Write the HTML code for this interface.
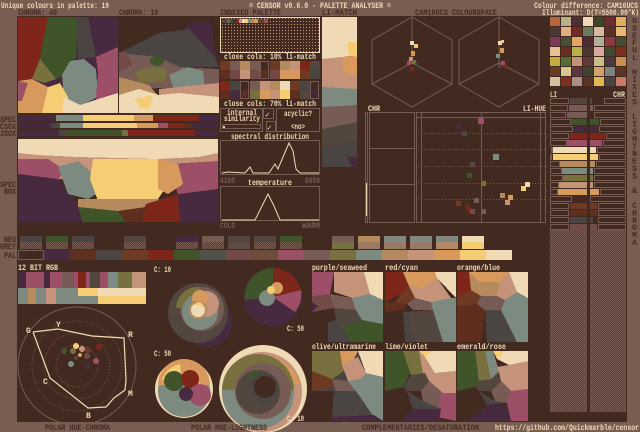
<!DOCTYPE html>
<html><head><meta charset="utf-8"><style>
html,body{margin:0;padding:0;background:#785e52;width:640px;height:432px;overflow:hidden}
svg{display:block}
text{font-family:"Liberation Mono",monospace;font-size:8px;font-weight:bold}
.vt{position:absolute;left:629px;top:17px;width:10px;font:bold 8px "Liberation Mono",monospace;color:#432a21;writing-mode:vertical-lr;text-orientation:upright;letter-spacing:-1.6px;line-height:10px}
</style></head><body>
<svg width="640" height="432" viewBox="0 0 640 432" xmlns="http://www.w3.org/2000/svg" shape-rendering="crispEdges">
<defs>
<pattern id="chk" width="2" height="2" patternUnits="userSpaceOnUse"><rect width="2" height="2" fill="#5b3f33"/><rect width="1" height="1" fill="#765c54"/><rect x="1" y="1" width="1" height="1" fill="#765c54"/></pattern>
<pattern id="dots" width="3" height="3" patternUnits="userSpaceOnUse"><rect width="3" height="3" fill="#432a21"/><rect width="1" height="1" fill="#c4937a"/></pattern>
</defs>
<rect width="640" height="432" fill="#785e52"/>
<rect x="17" y="16" width="610" height="406" fill="#432a21"/>
<text x="1" y="8" fill="#f0d9b5" textLength="108" lengthAdjust="spacingAndGlyphs">Unique colours in palette: 19</text>
<text x="249" y="8" fill="#f0d9b5" textLength="142" lengthAdjust="spacingAndGlyphs">= CENSOR v0.6.0 - PALETTE ANALYSER =</text>
<text x="534" y="8" fill="#f0d9b5" textLength="104" lengthAdjust="spacingAndGlyphs">Colour difference: CAM16UCS</text>
<text x="542" y="15" fill="#f0d9b5" textLength="97" lengthAdjust="spacingAndGlyphs">Illuminant: D(T=5500.00°K)</text>
<text x="18" y="15" fill="#432a21" textLength="39" lengthAdjust="spacingAndGlyphs">CHROMA: 40</text>
<text x="119" y="15" fill="#432a21" textLength="39" lengthAdjust="spacingAndGlyphs">CHROMA: 10</text>
<text x="220" y="15" fill="#432a21" textLength="61" lengthAdjust="spacingAndGlyphs">INDEXED PALETTE</text>
<text x="322" y="15" fill="#432a21" textLength="35" lengthAdjust="spacingAndGlyphs">LI-MATCH</text>
<text x="415" y="15" fill="#432a21" textLength="82" lengthAdjust="spacingAndGlyphs">CAM16UCS COLOURSPACE</text>
<g fill="#432a21">
<text x="0" y="122" textLength="16" lengthAdjust="spacingAndGlyphs">SPEC</text>
<text x="0" y="129" textLength="16" lengthAdjust="spacingAndGlyphs">CSOX</text>
<text x="0" y="136" textLength="16" lengthAdjust="spacingAndGlyphs">JSOX</text>
<text x="0" y="187" textLength="16" lengthAdjust="spacingAndGlyphs">SPEC</text>
<text x="4" y="194" textLength="12" lengthAdjust="spacingAndGlyphs">BOX</text>
<text x="4" y="242" textLength="12" lengthAdjust="spacingAndGlyphs">NEU</text>
<text x="0" y="249" textLength="16" lengthAdjust="spacingAndGlyphs">GREY</text>
<text x="4" y="258" textLength="12" lengthAdjust="spacingAndGlyphs">PAL</text>
</g>
<svg x="18" y="17" width="100" height="96" viewBox="0 0 100 96">
<rect width="100" height="96" fill="#472a40"/>
<polygon points="0,0 30,0 24,40 14,62 0,64" fill="#7e2619"/>
<polygon points="30,0 60,0 58,40 46,58 38,62 22,42" fill="#3f5428"/>
<polygon points="58,0 70,0 78,40 60,42" fill="#4a4443"/>
<polygon points="22,42 38,62 26,66 14,62" fill="#78703f"/>
<polygon points="44,58 52,44 66,42 78,52 80,80 60,90 46,80" fill="#7d8a80"/>
<polygon points="78,40 100,30 100,76 82,96 78,80 80,56" fill="#9c4f66"/>
<polygon points="0,64 14,62 30,70 36,86 30,96 0,96" fill="#d89a5c"/>
<polygon points="30,70 42,66 50,80 50,96 24,96" fill="#f5cd74"/>
<polygon points="46,80 62,88 80,82 100,76 100,96 44,96" fill="#f0d9b5"/>
<polygon points="0,64 10,66 4,84 0,84" fill="#9c4f66"/>
</svg>
<svg x="119" y="17" width="100" height="96" viewBox="0 0 100 96">
<rect width="100" height="96" fill="#432a21"/>
<polygon points="70,6 92,4 96,40 50,32" fill="#472a40"/>
<polygon points="40,16 70,12 96,40 100,50 0,50 0,36" fill="#4a4443"/>
<polygon points="0,36 40,40 60,50 100,52 100,70 0,72" fill="#765c54"/>
<polygon points="0,35 8,35 14,48 0,55" fill="#744a48"/>
<ellipse cx="38" cy="44" rx="7" ry="5" fill="#3f5428"/>
<polygon points="16,55 30,50 48,52 46,64 20,66" fill="#78703f"/>
<polygon points="0,60 30,68 40,80 0,82" fill="#b58a5c"/>
<polygon points="50,58 68,50 84,54 86,72 56,75" fill="#7d8a80"/>
<polygon points="40,72 100,66 100,82 40,84" fill="#c4937a"/>
<polygon points="0,78 20,72 40,78 60,76 100,80 100,96 0,96" fill="#f0d9b5"/>
<polygon points="16,82 34,78 30,92 22,92" fill="#f5cd74"/>
</svg>
<g>
<rect x="18" y="115" width="200" height="6" fill="#472a40"/><rect x="56" y="115" width="27" height="6" fill="#7d8a80"/><rect x="83" y="115" width="51" height="6" fill="#f5cd74"/><rect x="134" y="115" width="19" height="6" fill="#d89a5c"/><rect x="153" y="115" width="46" height="6" fill="#7e2619"/>
<rect x="18" y="123" width="200" height="5" fill="#472a40"/><rect x="51" y="123" width="5" height="5" fill="#4a4443"/><rect x="56" y="123" width="4" height="5" fill="#52463f"/><rect x="60" y="123" width="23" height="5" fill="#7d8a80"/><rect x="83" y="123" width="54" height="5" fill="#f5cd74"/><rect x="137" y="123" width="21" height="5" fill="#d89a5c"/><rect x="158" y="123" width="10" height="5" fill="#9c4f66"/><rect x="168" y="123" width="16" height="5" fill="#7e2619"/><rect x="184" y="123" width="8" height="5" fill="#5e2e1e"/>
<rect x="18" y="130" width="200" height="6" fill="#472a40"/><rect x="59" y="130" width="5" height="6" fill="#4a4443"/><rect x="64" y="130" width="3" height="6" fill="#52463f"/><rect x="67" y="130" width="55" height="6" fill="#3f5428"/><rect x="122" y="130" width="6" height="6" fill="#78703f"/><rect x="128" y="130" width="67" height="6" fill="#7e2619"/>
</g>
<svg x="18" y="139" width="200" height="83" viewBox="0 0 200 83">
<rect width="200" height="83" fill="#432a21"/>
<polygon points="0,10 200,10 200,40 0,40" fill="#c4937a"/>
<polygon points="0,20 30,20 45,30 40,45 0,40" fill="#9c4f66"/>
<polygon points="150,25 200,22 200,55 160,55" fill="#9c4f66"/>
<polygon points="0,35 40,40 55,60 80,83 0,83" fill="#472a40"/>
<polygon points="40,28 60,22 75,35 78,55 70,60 50,55" fill="#7d8a80"/>
<polygon points="75,20 140,20 150,45 140,60 80,62 72,40" fill="#f5cd74"/>
<polygon points="140,20 160,25 165,45 150,55 140,50" fill="#d89a5c"/>
<polygon points="60,60 140,60 150,70 100,72 60,68" fill="#b58a5c"/>
<polygon points="60,68 100,72 110,83 65,83" fill="#3f5428"/>
<polygon points="128,65 160,55 162,83 122,83" fill="#7e2619"/>
<polygon points="160,55 200,50 200,83 162,83" fill="#472a40"/>
<polygon points="100,72 128,68 125,83 108,83" fill="#5e2e1e"/>
<polygon points="0,0 200,0 200,14 180,18 140,20 60,18 20,16 0,14" fill="#f0d9b5"/>
</svg>
<rect x="220.5" y="17.5" width="99" height="35" fill="url(#dots)" stroke="#f0d9b5"/>
<g>
<rect x="223" y="19" width="4" height="4" fill="#4a4443"/><rect x="227" y="19" width="3" height="4" fill="#765c54"/><rect x="230" y="19" width="3" height="4" fill="#3f5428"/><rect x="233" y="19" width="3" height="4" fill="#472a40"/><rect x="236" y="19" width="3" height="4" fill="#7e2619"/><rect x="239" y="19" width="3" height="4" fill="#c4937a"/><rect x="242" y="19" width="3" height="4" fill="#f0d9b5"/><rect x="245" y="19" width="3" height="4" fill="#f5cd74"/><rect x="248" y="19" width="3" height="4" fill="#7d8a80"/><rect x="251" y="19" width="3" height="4" fill="#b58a5c"/><rect x="254" y="19" width="4" height="4" fill="#d89a5c"/><rect x="258" y="19" width="3" height="4" fill="#52463f"/><rect x="261" y="19" width="3" height="4" fill="#6e3a24"/><rect x="264" y="19" width="4" height="4" fill="#9c4f66"/>
</g>
<text x="224" y="59" fill="#f0d9b5" textLength="92" lengthAdjust="spacingAndGlyphs">close cols: 10% li-match</text>
<g>
<rect x="220" y="61" width="10" height="9" fill="#6e3a24"/><rect x="220" y="70" width="10" height="9" fill="#5e2e1e"/>
<rect x="230" y="61" width="10" height="9" fill="#765c54"/><rect x="230" y="70" width="10" height="9" fill="#744a48"/>
<rect x="240" y="61" width="10" height="9" fill="#b58a5c"/><rect x="240" y="70" width="10" height="9" fill="#c4937a"/>
<rect x="250" y="61" width="10" height="9" fill="#765c54"/><rect x="250" y="70" width="10" height="9" fill="#744a48"/>
<rect x="260.5" y="61.5" width="8" height="17" fill="#432a21" stroke="#765c54"/><rect x="262" y="70" width="5" height="7" fill="#5e2e1e"/>
<rect x="270" y="61" width="10" height="9" fill="#6e3a24"/><rect x="270" y="70" width="10" height="9" fill="#744a48"/>
<rect x="280" y="61" width="10" height="9" fill="#b58a5c"/><rect x="280" y="70" width="10" height="9" fill="#d89a5c"/>
<rect x="290" y="61" width="10" height="9" fill="#c4937a"/><rect x="290" y="70" width="10" height="9" fill="#d89a5c"/>
<rect x="300" y="61" width="10" height="9" fill="#7e2619"/><rect x="300" y="70" width="10" height="9" fill="#6e3a24"/>
<rect x="310" y="61" width="10" height="9" fill="#52463f"/><rect x="310" y="70" width="10" height="9" fill="#4a4443"/>
<rect x="220" y="81" width="10" height="9" fill="#7e2619"/><rect x="220" y="90" width="10" height="9" fill="#5e2e1e"/>
<rect x="230" y="81" width="10" height="9" fill="#4a4443"/><rect x="230" y="90" width="10" height="9" fill="#472a40"/>
<rect x="240.5" y="81.5" width="8" height="17" fill="#432a21" stroke="#765c54"/><rect x="242" y="90" width="5" height="7" fill="#5e2e1e"/>
<rect x="250" y="81" width="10" height="9" fill="#765c54"/><rect x="250" y="90" width="10" height="9" fill="#78703f"/>
<rect x="260" y="81" width="10" height="9" fill="#c4937a"/><rect x="260" y="90" width="10" height="9" fill="#d89a5c"/>
<rect x="270" y="81" width="10" height="9" fill="#b58a5c"/><rect x="270" y="90" width="10" height="9" fill="#c4937a"/>
<rect x="280" y="81" width="10" height="9" fill="#f0d9b5"/><rect x="280" y="90" width="10" height="9" fill="#f5cd74"/>
<rect x="290" y="81" width="10" height="9" fill="#6e3a24"/><rect x="290" y="90" width="10" height="9" fill="#5e2e1e"/>
<rect x="300" y="81" width="10" height="9" fill="#4a4443"/><rect x="300" y="90" width="10" height="9" fill="#52463f"/>
<rect x="310.5" y="81.5" width="8" height="17" fill="#432a21" stroke="#765c54"/><rect x="312" y="90" width="5" height="7" fill="#472a40"/>
</g>
<text x="224" y="106" fill="#f0d9b5" textLength="92" lengthAdjust="spacingAndGlyphs">close cols: 70% li-match</text>
<rect x="220.5" y="108.5" width="42" height="23" fill="none" stroke="#765c54"/>
<text x="227" y="115" fill="#f0d9b5" textLength="30" lengthAdjust="spacingAndGlyphs">internal</text>
<text x="224" y="121" fill="#f0d9b5" textLength="36" lengthAdjust="spacingAndGlyphs">similarity</text>
<rect x="222.5" y="124.5" width="38" height="4" fill="none" stroke="#765c54"/><rect x="223" y="126" width="2" height="2" fill="#f0d9b5"/>
<rect x="263.5" y="108.5" width="10" height="10" fill="none" stroke="#765c54"/><text x="265" y="117" fill="#f0d9b5">✓</text>
<rect x="266.5" y="121.5" width="9" height="10" fill="none" stroke="#765c54"/><text x="267" y="130" fill="#f0d9b5">✓</text>
<rect x="276.5" y="108.5" width="43" height="23" fill="none" stroke="#765c54"/>
<text x="284" y="116" fill="#f0d9b5" textLength="28" lengthAdjust="spacingAndGlyphs">acyclic?</text>
<text x="291" y="129" fill="#f0d9b5" textLength="14" lengthAdjust="spacingAndGlyphs">&lt;no&gt;</text>
<text x="231" y="139" fill="#f0d9b5" textLength="78" lengthAdjust="spacingAndGlyphs">spectral distribution</text>
<rect x="220.5" y="140.5" width="99" height="34" fill="none" stroke="#765c54"/>
<polyline points="222,173 228,172 245,173 250,167 253,173 269,173 275,164 278,169 283,157 289,143 293,151 296,169 300,173 319,173" fill="none" stroke="#f0d9b5" shape-rendering="auto"/>
<text x="220" y="183" fill="#765c54" textLength="15" lengthAdjust="spacingAndGlyphs">4100</text>
<text x="305" y="183" fill="#765c54" textLength="15" lengthAdjust="spacingAndGlyphs">6650</text>
<text x="248" y="185" fill="#f0d9b5" textLength="44" lengthAdjust="spacingAndGlyphs">temperature</text>
<rect x="220.5" y="186.5" width="99" height="34" fill="none" stroke="#765c54"/>
<polyline points="222,220 255,220 262,206 268,194 274,206 280,220 319,220" fill="none" stroke="#f0d9b5" shape-rendering="auto"/>
<text x="220" y="228" fill="#765c54" textLength="15" lengthAdjust="spacingAndGlyphs">COLD</text>
<text x="302" y="228" fill="#765c54" textLength="18" lengthAdjust="spacingAndGlyphs">WARM</text>
<svg x="322" y="17" width="35" height="153" viewBox="0 0 35 153">
<rect width="35" height="153" fill="#432a21"/>
<polygon points="0,0 35,0 35,153 0,153" fill="#f0d9b5"/>
<polygon points="0,42 20,40 35,38 35,150 0,150" fill="#c4937a"/>
<polygon points="26,25 35,25 35,40 26,38" fill="#f5cd74"/>
<polygon points="20,40 35,40 35,58 22,56" fill="#d89a5c"/>
<polygon points="0,70 35,72 35,88 0,90" fill="#7d8a80"/>
<polygon points="0,90 35,88 35,105 0,112" fill="#765c54"/>
<polygon points="0,112 35,105 35,130 0,140" fill="#52463f"/>
<polygon points="0,130 35,125 35,150 0,150" fill="#4a4443"/>
<polygon points="25,140 35,140 35,150 30,150" fill="#472a40"/>
<polygon points="0,150 35,150 35,153 0,153" fill="#432a21"/>
</svg>
<g fill="none" stroke="#765c54" shape-rendering="auto">
<polygon points="412,17 452,40 452,84 412,107 372,84 372,40"/>
<line x1="412" y1="17" x2="412" y2="63"/><line x1="412" y1="63" x2="372" y2="84"/><line x1="412" y1="63" x2="452" y2="84"/>
<polygon points="499,17 539,40 539,84 499,107 459,84 459,40"/>
<line x1="499" y1="17" x2="499" y2="63"/><line x1="499" y1="63" x2="459" y2="84"/><line x1="499" y1="63" x2="539" y2="84"/>
</g>
<g>
<rect x="410" y="41" width="4" height="4" fill="#f0d9b5"/><rect x="414" y="44" width="4" height="4" fill="#f5cd74"/><rect x="411" y="51" width="4" height="5" fill="#d89a5c"/><rect x="409" y="57" width="4" height="4" fill="#c4937a"/><rect x="407" y="61" width="4" height="4" fill="#9c4f66"/><rect x="412" y="60" width="4" height="4" fill="#78703f"/><rect x="415" y="63" width="3" height="3" fill="#3f5428"/><rect x="410" y="67" width="4" height="4" fill="#7e2619"/><rect x="408" y="69" width="3" height="3" fill="#472a40"/>
<rect x="498" y="41" width="4" height="4" fill="#f0d9b5"/><rect x="501" y="40" width="3" height="3" fill="#f5cd74"/><rect x="500" y="48" width="4" height="5" fill="#d89a5c"/><rect x="496" y="54" width="4" height="4" fill="#7d8a80"/><rect x="501" y="61" width="4" height="4" fill="#9c4f66"/><rect x="503" y="65" width="4" height="3" fill="#7e2619"/><rect x="498" y="64" width="3" height="4" fill="#52463f"/><rect x="499" y="69" width="3" height="3" fill="#472a40"/>
</g>
<text x="368" y="111" fill="#f0d9b5" textLength="12" lengthAdjust="spacingAndGlyphs">CHR</text>
<text x="523" y="111" fill="#f0d9b5" textLength="23" lengthAdjust="spacingAndGlyphs">LI-HUE</text>
<g fill="none" stroke="#765c54">
<rect x="365.5" y="112.5" width="2" height="110"/>
<rect x="369.5" y="112.5" width="45" height="110"/>
<line x1="370" y1="148.5" x2="414" y2="148.5"/><line x1="370" y1="184.5" x2="414" y2="184.5"/>
<rect x="416.5" y="112.5" width="129" height="110"/>
<line x1="417" y1="117.5" x2="545" y2="117.5"/>
<line x1="421.5" y1="113" x2="421.5" y2="222"/><line x1="540.5" y1="113" x2="540.5" y2="222"/>
<line x1="481.5" y1="113" x2="481.5" y2="222"/>
<g stroke-dasharray="1 2"><line x1="418" y1="133.5" x2="545" y2="133.5"/><line x1="418" y1="149.5" x2="545" y2="149.5"/><line x1="418" y1="166.5" x2="545" y2="166.5"/><line x1="418" y1="183.5" x2="545" y2="183.5"/><line x1="418" y1="199.5" x2="545" y2="199.5"/></g>
</g>
<rect x="366" y="183" width="1" height="33" fill="#f0d9b5"/>
<g>
<rect x="478" y="118" width="6" height="6" fill="#9c4f66"/><rect x="457" y="124" width="5" height="5" fill="#472a40"/><rect x="462" y="131" width="5" height="5" fill="#4a4443"/><rect x="493" y="154" width="6" height="6" fill="#7d8a80"/><rect x="470" y="162" width="5" height="5" fill="#52463f"/><rect x="467" y="173" width="5" height="5" fill="#3f5428"/><rect x="481" y="181" width="5" height="5" fill="#78703f"/><rect x="525" y="182" width="5" height="5" fill="#f0d9b5"/><rect x="521" y="186" width="5" height="5" fill="#f5cd74"/><rect x="500" y="193" width="5" height="5" fill="#b58a5c"/><rect x="508" y="195" width="5" height="5" fill="#d89a5c"/><rect x="505" y="200" width="5" height="5" fill="#c4937a"/><rect x="474" y="198" width="5" height="5" fill="#765c54"/><rect x="456" y="201" width="5" height="5" fill="#6e3a24"/><rect x="465" y="203" width="5" height="5" fill="#5e2e1e"/><rect x="467" y="208" width="4" height="4" fill="#7e2619"/><rect x="470" y="209" width="5" height="5" fill="#744a48"/><rect x="481" y="209" width="5" height="5" fill="#765c54"/>
</g>
<g>
<rect x="550" y="17" width="76" height="70" fill="#432a21"/>
<rect x="550" y="17" width="10" height="9" fill="#b5663a"/><rect x="561" y="17" width="10" height="9" fill="#b8b08a"/><rect x="572" y="17" width="10" height="9" fill="#4a3030"/><rect x="583" y="17" width="10" height="9" fill="#f0d9b5"/><rect x="594" y="17" width="10" height="9" fill="#3f4428"/><rect x="605" y="17" width="10" height="9" fill="#6e2c30"/><rect x="616" y="17" width="10" height="9" fill="#e0ad60"/>
<rect x="550" y="27" width="10" height="9" fill="#4a3838"/><rect x="561" y="27" width="10" height="9" fill="#e0b080"/><rect x="572" y="27" width="10" height="9" fill="#6e2c22"/><rect x="583" y="27" width="10" height="9" fill="#6a7a60"/><rect x="594" y="27" width="10" height="9" fill="#d8b8a0"/><rect x="605" y="27" width="10" height="9" fill="#5a3028"/><rect x="616" y="27" width="10" height="9" fill="#e8b878"/>
<rect x="550" y="37" width="10" height="9" fill="#7a3a58"/><rect x="561" y="37" width="10" height="9" fill="#4a5038"/><rect x="572" y="37" width="10" height="9" fill="#e0a860"/><rect x="583" y="37" width="10" height="9" fill="#502a30"/><rect x="594" y="37" width="10" height="9" fill="#b0b098"/><rect x="605" y="37" width="10" height="9" fill="#8a3a40"/><rect x="616" y="37" width="10" height="9" fill="#4a4a30"/>
<rect x="550" y="47" width="10" height="9" fill="#e8c098"/><rect x="561" y="47" width="10" height="9" fill="#6a2c22"/><rect x="572" y="47" width="10" height="9" fill="#b8b048"/><rect x="583" y="47" width="10" height="9" fill="#4a3830"/><rect x="594" y="47" width="10" height="9" fill="#d8a8a0"/><rect x="605" y="47" width="10" height="9" fill="#3f4a30"/><rect x="616" y="47" width="10" height="9" fill="#7e3020"/>
<rect x="550" y="57" width="10" height="9" fill="#c8a840"/><rect x="561" y="57" width="10" height="9" fill="#5a6a38"/><rect x="572" y="57" width="10" height="9" fill="#c4937a"/><rect x="583" y="57" width="10" height="9" fill="#5e3a38"/><rect x="594" y="57" width="10" height="9" fill="#c8c088"/><rect x="605" y="57" width="10" height="9" fill="#4a3a40"/><rect x="616" y="57" width="10" height="9" fill="#c89050"/>
<rect x="550" y="67" width="10" height="9" fill="#6a3a22"/><rect x="561" y="67" width="10" height="9" fill="#d8c890"/><rect x="572" y="67" width="10" height="9" fill="#5a3840"/><rect x="583" y="67" width="10" height="9" fill="#3f4430"/><rect x="594" y="67" width="10" height="9" fill="#d8a070"/><rect x="605" y="67" width="10" height="9" fill="#7a8480"/><rect x="616" y="67" width="10" height="9" fill="#5a3428"/>
<rect x="550" y="77" width="10" height="9" fill="#d8c0a0"/><rect x="561" y="77" width="10" height="9" fill="#7e3022"/><rect x="572" y="77" width="10" height="9" fill="#a89088"/><rect x="583" y="77" width="10" height="9" fill="#5a3428"/><rect x="594" y="77" width="10" height="9" fill="#e0b858"/><rect x="605" y="77" width="10" height="9" fill="#4a4443"/><rect x="616" y="77" width="10" height="9" fill="#c87a6a"/>
</g>
<text x="550" y="97" fill="#f0d9b5" textLength="7" lengthAdjust="spacingAndGlyphs">LI</text>
<text x="613" y="97" fill="#f0d9b5" textLength="12" lengthAdjust="spacingAndGlyphs">CHR</text>
<rect x="550" y="230" width="37" height="182" fill="url(#chk)"/>
<rect x="590" y="230" width="36" height="182" fill="url(#chk)"/>
<g fill="none" stroke="#765c54">
<rect x="550.5" y="98.5" width="18" height="5"/><rect x="604.5" y="98.5" width="21" height="5"/>
<rect x="550.5" y="105.5" width="17" height="5"/><rect x="594.5" y="105.5" width="31" height="5"/>
<rect x="550.5" y="112.5" width="15" height="5"/><rect x="594.5" y="112.5" width="31" height="5"/>
<rect x="550.5" y="119.5" width="20" height="5"/><rect x="600.5" y="119.5" width="25" height="5"/>
<rect x="550.5" y="126.5" width="22" height="5"/><rect x="599.5" y="126.5" width="26" height="5"/>
<rect x="550.5" y="133.5" width="18" height="5"/><rect x="606.5" y="133.5" width="19" height="5"/>
<rect x="550.5" y="140.5" width="16" height="5"/><rect x="603.5" y="140.5" width="22" height="5"/>
<rect x="551.5" y="147.5" width="1" height="5"/><rect x="597.5" y="147.5" width="28" height="5"/>
<rect x="550.5" y="154.5" width="1" height="5"/><rect x="599.5" y="154.5" width="26" height="5"/>
<rect x="550.5" y="161.5" width="9" height="5"/><rect x="596.5" y="161.5" width="29" height="5"/>
<rect x="550.5" y="168.5" width="11" height="5"/><rect x="594.5" y="168.5" width="31" height="5"/>
<rect x="550.5" y="175.5" width="12" height="5"/><rect x="594.5" y="175.5" width="31" height="5"/>
<rect x="550.5" y="182.5" width="8" height="5"/><rect x="594.5" y="182.5" width="31" height="5"/>
<rect x="550.5" y="189.5" width="7" height="5"/><rect x="600.5" y="189.5" width="25" height="5"/>
<rect x="550.5" y="196.5" width="21" height="5"/><rect x="590.5" y="196.5" width="35" height="5"/>
<rect x="550.5" y="203.5" width="18" height="5"/><rect x="598.5" y="203.5" width="27" height="5"/>
<rect x="550.5" y="210.5" width="18" height="5"/><rect x="598.5" y="210.5" width="27" height="5"/>
<rect x="550.5" y="217.5" width="18" height="5"/><rect x="598.5" y="217.5" width="27" height="5"/>
<rect x="550.5" y="224.5" width="18" height="5"/><rect x="598.5" y="224.5" width="27" height="5"/>
</g>
<g>
<rect x="570" y="98" width="17" height="6" fill="#52463f"/><rect x="590" y="98" width="2" height="6" fill="#52463f"/>
<rect x="569" y="105" width="18" height="6" fill="#765c54"/><rect x="590" y="105" width="3" height="6" fill="#765c54"/>
<rect x="567" y="112" width="20" height="6" fill="#765c54"/>
<rect x="571" y="119" width="16" height="6" fill="#3f5428"/><rect x="590" y="119" width="9" height="6" fill="#3f5428"/>
<rect x="573" y="126" width="14" height="6" fill="#472a40"/><rect x="590" y="126" width="8" height="6" fill="#472a40"/>
<rect x="570" y="133" width="17" height="6" fill="#7e2619"/><rect x="590" y="133" width="15" height="6" fill="#7e2619"/>
<rect x="567" y="140" width="20" height="6" fill="#9c4f66"/><rect x="590" y="140" width="12" height="6" fill="#9c4f66"/>
<rect x="553" y="147" width="34" height="6" fill="#f0d9b5"/><rect x="590" y="147" width="6" height="6" fill="#f0d9b5"/>
<rect x="553" y="154" width="34" height="6" fill="#f5cd74"/><rect x="590" y="154" width="8" height="6" fill="#f5cd74"/>
<rect x="560" y="161" width="27" height="6" fill="#b58a5c"/><rect x="590" y="161" width="5" height="6" fill="#b58a5c"/>
<rect x="562" y="168" width="25" height="6" fill="#7d8a80"/><rect x="590" y="168" width="3" height="6" fill="#7d8a80"/>
<rect x="563" y="175" width="24" height="6" fill="#78703f"/><rect x="590" y="175" width="3" height="6" fill="#78703f"/>
<rect x="559" y="182" width="28" height="6" fill="#c4937a"/><rect x="590" y="182" width="3" height="6" fill="#c4937a"/>
<rect x="558" y="189" width="29" height="6" fill="#d89a5c"/><rect x="590" y="189" width="9" height="6" fill="#d89a5c"/>
<rect x="570" y="203" width="17" height="6" fill="#6e3a24"/><rect x="590" y="203" width="7" height="6" fill="#6e3a24"/>
<rect x="570" y="210" width="17" height="6" fill="#5e2e1e"/><rect x="590" y="210" width="7" height="6" fill="#5e2e1e"/>
<rect x="570" y="217" width="17" height="6" fill="#4a4443"/><rect x="590" y="217" width="3" height="6" fill="#4a4443"/>
<rect x="570" y="224" width="17" height="6" fill="#744a48"/><rect x="590" y="224" width="7" height="6" fill="#744a48"/>
</g>
<g>
<rect x="20" y="236" width="22" height="6" fill="#4a4443"/><rect x="20" y="242" width="22" height="7" fill="url(#chk)"/>
<rect x="46" y="236" width="22" height="6" fill="#3f5428"/><rect x="46" y="242" width="22" height="7" fill="url(#chk)"/>
<rect x="72" y="236" width="22" height="6" fill="#4a4443"/><rect x="72" y="242" width="22" height="7" fill="url(#chk)"/>
<rect x="124" y="236" width="22" height="6" fill="#52463f"/><rect x="124" y="242" width="22" height="7" fill="url(#chk)"/>
<rect x="176" y="236" width="22" height="6" fill="#472a40"/><rect x="176" y="242" width="22" height="7" fill="url(#chk)"/>
<rect x="202" y="236" width="22" height="6" fill="#765c54"/><rect x="202" y="242" width="22" height="7" fill="url(#chk)"/>
<rect x="228" y="236" width="22" height="6" fill="#52463f"/><rect x="228" y="242" width="22" height="7" fill="#5e4a44"/>
<rect x="254" y="236" width="22" height="6" fill="#52463f"/><rect x="254" y="242" width="22" height="7" fill="url(#chk)"/>
<rect x="280" y="236" width="22" height="6" fill="#3f5428"/><rect x="280" y="242" width="22" height="7" fill="url(#chk)"/>
<rect x="332" y="236" width="22" height="6" fill="#765c54"/><rect x="332" y="242" width="22" height="7" fill="#78703f"/>
<rect x="358" y="236" width="22" height="6" fill="#b58a5c"/><rect x="358" y="242" width="22" height="7" fill="#9a7a64"/>
<rect x="384" y="236" width="22" height="6" fill="#7d8a80"/><rect x="384" y="242" width="22" height="7" fill="#9a7a64"/>
<rect x="410" y="236" width="22" height="6" fill="#7d8a80"/><rect x="410" y="242" width="22" height="7" fill="#9a7a64"/>
<rect x="436" y="236" width="22" height="6" fill="#7d8a80"/><rect x="436" y="242" width="22" height="7" fill="#b08a64"/>
<rect x="462" y="236" width="22" height="6" fill="#f0d9b5"/><rect x="462" y="242" width="22" height="7" fill="#f5cd74"/>
</g>
<g>
<rect x="18.5" y="250.5" width="25" height="9" fill="none" stroke="#765c54"/>
<rect x="44" y="250" width="26" height="10" fill="#472a40"/><rect x="70" y="250" width="26" height="10" fill="#5e2e1e"/><rect x="96" y="250" width="26" height="10" fill="#4a4443"/><rect x="122" y="250" width="26" height="10" fill="#6e3a24"/><rect x="148" y="250" width="26" height="10" fill="#7e2619"/><rect x="174" y="250" width="26" height="10" fill="#3f5428"/><rect x="200" y="250" width="26" height="10" fill="#4f5248"/><rect x="226" y="250" width="26" height="10" fill="#744a48"/><rect x="252" y="250" width="26" height="10" fill="#6e4c3a"/><rect x="278" y="250" width="26" height="10" fill="#9c4f66"/><rect x="304" y="250" width="26" height="10" fill="#765c54"/><rect x="330" y="250" width="26" height="10" fill="#78703f"/><rect x="356" y="250" width="26" height="10" fill="#7d8a80"/><rect x="382" y="250" width="26" height="10" fill="#b58a5c"/><rect x="408" y="250" width="26" height="10" fill="#c4937a"/><rect x="434" y="250" width="26" height="10" fill="#d89a5c"/><rect x="460" y="250" width="26" height="10" fill="#f5cd74"/><rect x="486" y="250" width="26" height="10" fill="#f0d9b5"/>
</g>
<text x="18" y="270" fill="#f0d9b5" textLength="40" lengthAdjust="spacingAndGlyphs">12 BIT RGB</text>
<svg x="18" y="272" width="128" height="32" viewBox="0 0 128 32">
<rect width="128" height="16" fill="#9c4f66"/>
<rect x="0" width="8" height="16" fill="#472a40"/><rect x="26" width="6" height="16" fill="#472a40"/><rect x="60" width="8" height="16" fill="#7e2619"/><rect x="90" width="10" height="16" fill="#7d8a80"/><rect x="100" width="14" height="16" fill="#78703f"/><rect x="114" width="14" height="16" fill="#c4937a"/><rect x="44" y="0" width="12" height="16" fill="#765c54"/><rect x="72" y="0" width="10" height="16" fill="#52463f"/>
<rect y="16" width="128" height="16" fill="#f5cd74"/>
<rect y="16" width="60" height="16" fill="#7d8a80"/><rect x="10" y="16" width="8" height="16" fill="#b58a5c"/><rect x="28" y="16" width="10" height="16" fill="#c4937a"/><rect x="60" y="24" width="20" height="8" fill="#7d8a80"/><rect x="80" y="16" width="48" height="8" fill="#f0d9b5"/>
</svg>
<g fill="none" shape-rendering="auto">
<circle cx="77" cy="366" r="59" stroke="#765c54"/>
<circle cx="77" cy="366" r="45" stroke="#765c54" stroke-dasharray="1 2"/>
<circle cx="77" cy="366" r="33" stroke="#765c54" stroke-dasharray="1 2"/>
<circle cx="77" cy="366" r="21" stroke="#765c54" stroke-dasharray="1 2"/>
<polyline points="33,332 58,329 92,336 124,338 126,380 125,390 114,398 106,407 88,408 50,378 33,332" stroke="#f0d9b5" stroke-width="1.2"/>
</g>
<g fill="#f0d9b5">
<text x="26" y="333">G</text><text x="56" y="327">Y</text><text x="128" y="337">R</text><text x="128" y="396">M</text><text x="86" y="418">B</text><text x="43" y="384">C</text>
</g>
<g>
<circle cx="76" cy="346" r="3" fill="#f5cd74"/><circle cx="99" cy="347" r="3" fill="#7e2619"/><circle cx="64" cy="351" r="3" fill="#3f5428"/><circle cx="73" cy="351" r="3" fill="#78703f"/><circle cx="82" cy="349" r="3" fill="#c4937a"/><circle cx="88" cy="350" r="3" fill="#6e3a24"/><circle cx="87" cy="356" r="3" fill="#744a48"/><circle cx="96" cy="361" r="3" fill="#9c4f66"/><circle cx="71" cy="364" r="3" fill="#7d8a80"/><circle cx="88" cy="366" r="3" fill="#472a40"/><circle cx="80" cy="355" r="2" fill="#d89a5c"/><circle cx="76" cy="358" r="2" fill="#52463f"/>
</g>
<text x="154" y="272" fill="#f0d9b5" textLength="17" lengthAdjust="spacingAndGlyphs">C: 10</text>
<g shape-rendering="auto">
<circle cx="207" cy="322" r="25" fill="#472a40"/>
<circle cx="198" cy="313" r="30" fill="#52463f"/>
<circle cx="202" cy="309" r="22" fill="#765c54"/>
<path d="M176,308 A22,22 0 0 1 200,287 L200,309Z" fill="#78703f"/>
<circle cx="200" cy="312" r="18" fill="#7d8a80"/>
<circle cx="206" cy="304" r="13" fill="#c4937a"/>
<circle cx="200" cy="298" r="8" fill="#d89a5c"/>
<circle cx="198" cy="310" r="9" fill="#b58a5c"/>
<circle cx="198" cy="310" r="7" fill="#f0d9b5"/>
<circle cx="199" cy="306" r="4" fill="#f5cd74"/>
<circle cx="198" cy="311" r="6" fill="#f0d9b5"/>
<circle cx="273" cy="297" r="29" fill="#472a40"/>
<path d="M273,297 L250,280 A29,29 0 0 1 273,268Z" fill="#3f5428"/>
<path d="M273,297 L245,300 A29,29 0 0 1 250,280Z" fill="#3f5428"/>
<path d="M273,297 L273,268 A29,29 0 0 1 301,290Z" fill="#7e2619"/>
<path d="M273,297 L301,290 A29,29 0 0 1 295,312Z" fill="#9c4f66"/>
<circle cx="267" cy="298" r="8" fill="#7d8a80"/>
<circle cx="277" cy="288" r="6" fill="#d89a5c"/>
<circle cx="271" cy="290" r="4" fill="#f5cd74"/>
<circle cx="184" cy="389" r="29" fill="#f0d9b5"/>
<circle cx="184" cy="391" r="26" fill="#7d8a80"/>
<path d="M158,385 A26,26 0 0 1 210,385 Z" fill="#d89a5c"/>
<path d="M162,380 A24,24 0 0 1 180,364 L182,380Z" fill="#f5cd74"/>
<circle cx="174" cy="381" r="10" fill="#3f5428"/>
<circle cx="190" cy="379" r="9" fill="#7e2619"/>
<circle cx="200" cy="395" r="11" fill="#9c4f66"/>
<circle cx="186" cy="394" r="7" fill="#472a40"/>
<circle cx="263" cy="389" r="44" fill="#f0d9b5"/>
<circle cx="262" cy="392" r="40" fill="#c4937a"/>
<path d="M224,384 A40,40 0 0 1 300,384 Z" fill="#d89a5c"/>
<circle cx="258" cy="393" r="36" fill="#7d8a80"/>
<path d="M222,390 A36,36 0 0 1 294,390 Z" fill="#78703f"/>
<circle cx="263" cy="391" r="28" fill="#765c54"/>
<circle cx="258" cy="392" r="22" fill="#52463f"/>
<circle cx="256" cy="377" r="7" fill="#3f5428"/>
<circle cx="264" cy="388" r="15" fill="#4a4443"/>
<circle cx="265" cy="387" r="11" fill="#432a21"/>
</g>
<text x="154" y="356" fill="#f0d9b5" textLength="17" lengthAdjust="spacingAndGlyphs">C: 50</text>
<text x="287" y="331" fill="#f0d9b5" textLength="17" lengthAdjust="spacingAndGlyphs">C: 50</text>
<text x="287" y="421" fill="#f0d9b5" textLength="17" lengthAdjust="spacingAndGlyphs">C: 10</text>
<text x="312" y="270" fill="#f0d9b5" textLength="55" lengthAdjust="spacingAndGlyphs">purple/seaweed</text>
<text x="385" y="270" fill="#f0d9b5" textLength="33" lengthAdjust="spacingAndGlyphs">red/cyan</text>
<text x="457" y="270" fill="#f0d9b5" textLength="43" lengthAdjust="spacingAndGlyphs">orange/blue</text>
<text x="312" y="349" fill="#f0d9b5" textLength="64" lengthAdjust="spacingAndGlyphs">olive/ultramarine</text>
<text x="385" y="349" fill="#f0d9b5" textLength="43" lengthAdjust="spacingAndGlyphs">lime/violet</text>
<text x="457" y="349" fill="#f0d9b5" textLength="49" lengthAdjust="spacingAndGlyphs">emerald/rose</text>
<svg x="312" y="272" width="71" height="70" viewBox="0 0 71 70">
<rect width="71" height="70" fill="#432a21"/>
<polygon points="0,0 22,0 18,22 0,24" fill="#9c4f66"/>
<polygon points="22,0 52,0 58,22 40,26 22,20" fill="#c4937a"/>
<polygon points="52,0 71,0 71,28 58,22" fill="#f0d9b5"/>
<polygon points="0,24 18,22 22,36 0,40" fill="#744a48"/>
<polygon points="18,22 40,26 44,38 30,40 22,36" fill="#765c54"/>
<polygon points="40,26 58,22 71,28 71,52 50,48 44,38" fill="#7d8a80"/>
<polygon points="22,36 44,38 50,48 30,56 24,48" fill="#52463f"/>
<polygon points="24,48 30,56 40,70 16,70 16,50" fill="#4a4443"/>
<polygon points="30,56 50,48 71,52 71,70 40,70" fill="#3f5428"/>
<polygon points="0,30 6,34 0,40" fill="#472a40"/>
</svg>
<svg x="385" y="272" width="71" height="70" viewBox="0 0 71 70">
<rect width="71" height="70" fill="#432a21"/>
<polygon points="0,0 18,0 24,14 16,22 0,30" fill="#7e2619"/>
<polygon points="18,0 50,0 52,6 38,16 24,14" fill="#d89a5c"/>
<polygon points="50,0 71,0 71,26 52,6" fill="#f0d9b5"/>
<polygon points="24,14 38,16 52,6 66,26 46,30 30,26" fill="#c4937a"/>
<polygon points="16,22 24,14 30,26 22,32 10,30" fill="#6e3a24"/>
<polygon points="22,32 30,26 46,30 48,38 28,38" fill="#765c54"/>
<polygon points="46,30 66,26 71,26 71,70 58,70 48,38" fill="#7d8a80"/>
<polygon points="0,30 10,30 22,32 18,38 0,40" fill="#5e2e1e"/>
<polygon points="22,40 48,38 58,70 30,70" fill="#52463f"/>
<polygon points="18,40 22,40 30,70 20,70" fill="#4a4443"/>
</svg>
<svg x="457" y="272" width="71" height="70" viewBox="0 0 71 70">
<rect width="71" height="70" fill="#432a21"/>
<polygon points="0,0 12,0 14,18 0,26" fill="#7e2619"/>
<polygon points="12,0 52,0 42,10 22,10" fill="#d89a5c"/>
<polygon points="52,0 71,0 71,26 60,20" fill="#f0d9b5"/>
<polygon points="12,0 22,10 42,10 40,24 24,24 14,18" fill="#b58a5c"/>
<polygon points="42,10 52,0 60,20 48,28 40,24" fill="#c4937a"/>
<polygon points="0,26 14,18 24,24 20,32 0,34" fill="#6e3a24"/>
<polygon points="24,24 40,24 48,28 44,38 28,38 20,32" fill="#765c54"/>
<polygon points="48,28 60,20 71,26 71,70 60,70 44,38" fill="#7d8a80"/>
<polygon points="28,38 44,38 60,70 30,70" fill="#4a4443"/>
<polygon points="0,34 20,32 28,38 24,70 0,70" fill="#5e2e1e"/>
</svg>
<svg x="312" y="351" width="71" height="70" viewBox="0 0 71 70">
<rect width="71" height="70" fill="#4a4443"/>
<polygon points="0,0 38,0 32,20 20,28 0,20" fill="#78703f"/>
<polygon points="28,0 46,0 40,12 30,14" fill="#d89a5c"/>
<polygon points="46,0 71,0 71,26 54,22" fill="#f0d9b5"/>
<polygon points="30,14 46,6 54,22 48,28 36,30" fill="#c4937a"/>
<polygon points="0,20 20,28 22,36 0,40" fill="#6e3a24"/>
<polygon points="20,28 36,30 44,40 24,40" fill="#765c54"/>
<polygon points="36,30 48,28 54,22 71,26 71,70 62,70 48,46" fill="#7d8a80"/>
<polygon points="0,40 24,40 26,70 0,70" fill="#432a21"/>
<polygon points="22,40 44,40 62,66 20,66" fill="#4a4443"/>
<polygon points="20,66 62,64 71,70 20,70" fill="#472a40"/>
</svg>
<svg x="385" y="351" width="71" height="70" viewBox="0 0 71 70">
<rect width="71" height="70" fill="#432a21"/>
<polygon points="0,0 18,0 26,20 18,36 0,40" fill="#3f5428"/>
<polygon points="18,0 34,0 40,22 26,24" fill="#78703f"/>
<polygon points="34,0 48,0 44,10 40,8" fill="#f5cd74"/>
<polygon points="40,6 48,0 71,0 71,20 50,22" fill="#f0d9b5"/>
<polygon points="34,0 40,6 50,22 44,30 38,22" fill="#c4937a"/>
<polygon points="50,22 71,20 71,42 58,42 44,30" fill="#c4937a"/>
<polygon points="18,36 26,24 40,22 44,30 36,40 22,40" fill="#52463f"/>
<polygon points="36,40 44,30 58,42 56,58 38,50" fill="#765c54"/>
<polygon points="56,42 71,42 71,70 52,66" fill="#9c4f66"/>
<polygon points="0,40 22,40 38,50 26,58 0,70" fill="#432a21"/>
<polygon points="22,40 38,50 56,58 28,58" fill="#4a4443"/>
<polygon points="16,70 28,58 56,58 54,70" fill="#472a40"/>
</svg>
<svg x="457" y="351" width="71" height="70" viewBox="0 0 71 70">
<rect width="71" height="70" fill="#432a21"/>
<polygon points="0,0 18,0 22,30 18,36 0,40" fill="#3f5428"/>
<polygon points="18,0 28,0 34,28 22,30" fill="#78703f"/>
<polygon points="28,0 36,0 42,20 34,28" fill="#7d8a80"/>
<polygon points="36,0 48,0 44,10 40,8" fill="#f5cd74"/>
<polygon points="40,8 48,0 71,0 71,10 52,14" fill="#f0d9b5"/>
<polygon points="40,16 52,14 71,10 71,38 54,40 44,30" fill="#c4937a"/>
<polygon points="18,36 22,30 34,28 42,20 44,30 34,40 22,40" fill="#52463f"/>
<polygon points="34,40 44,30 54,40 50,52 38,50" fill="#765c54"/>
<polygon points="54,40 71,38 71,70 54,70 50,52" fill="#9c4f66"/>
<polygon points="0,40 22,40 30,54 24,60 0,70" fill="#432a21"/>
<polygon points="22,40 38,50 50,52 30,54" fill="#4a4443"/>
<polygon points="10,70 24,60 30,54 50,54 54,70" fill="#472a40"/>
</svg>
<text x="45" y="430" fill="#432a21" textLength="65" lengthAdjust="spacingAndGlyphs">POLAR HUE-CHROMA</text>
<text x="191" y="430" fill="#432a21" textLength="76" lengthAdjust="spacingAndGlyphs">POLAR HUE-LIGHTNESS</text>
<text x="362" y="430" fill="#432a21" textLength="117" lengthAdjust="spacingAndGlyphs">COMPLEMENTARIES/DESATURATION</text>
<text x="495" y="430" fill="#f0d9b5" textLength="144" lengthAdjust="spacingAndGlyphs">https://github.com/Quickmarble/censor</text>
</svg>
<div class="vt">USEFUL MIXES LIGHTNESS &amp; CHROMA</div>
</body></html>
